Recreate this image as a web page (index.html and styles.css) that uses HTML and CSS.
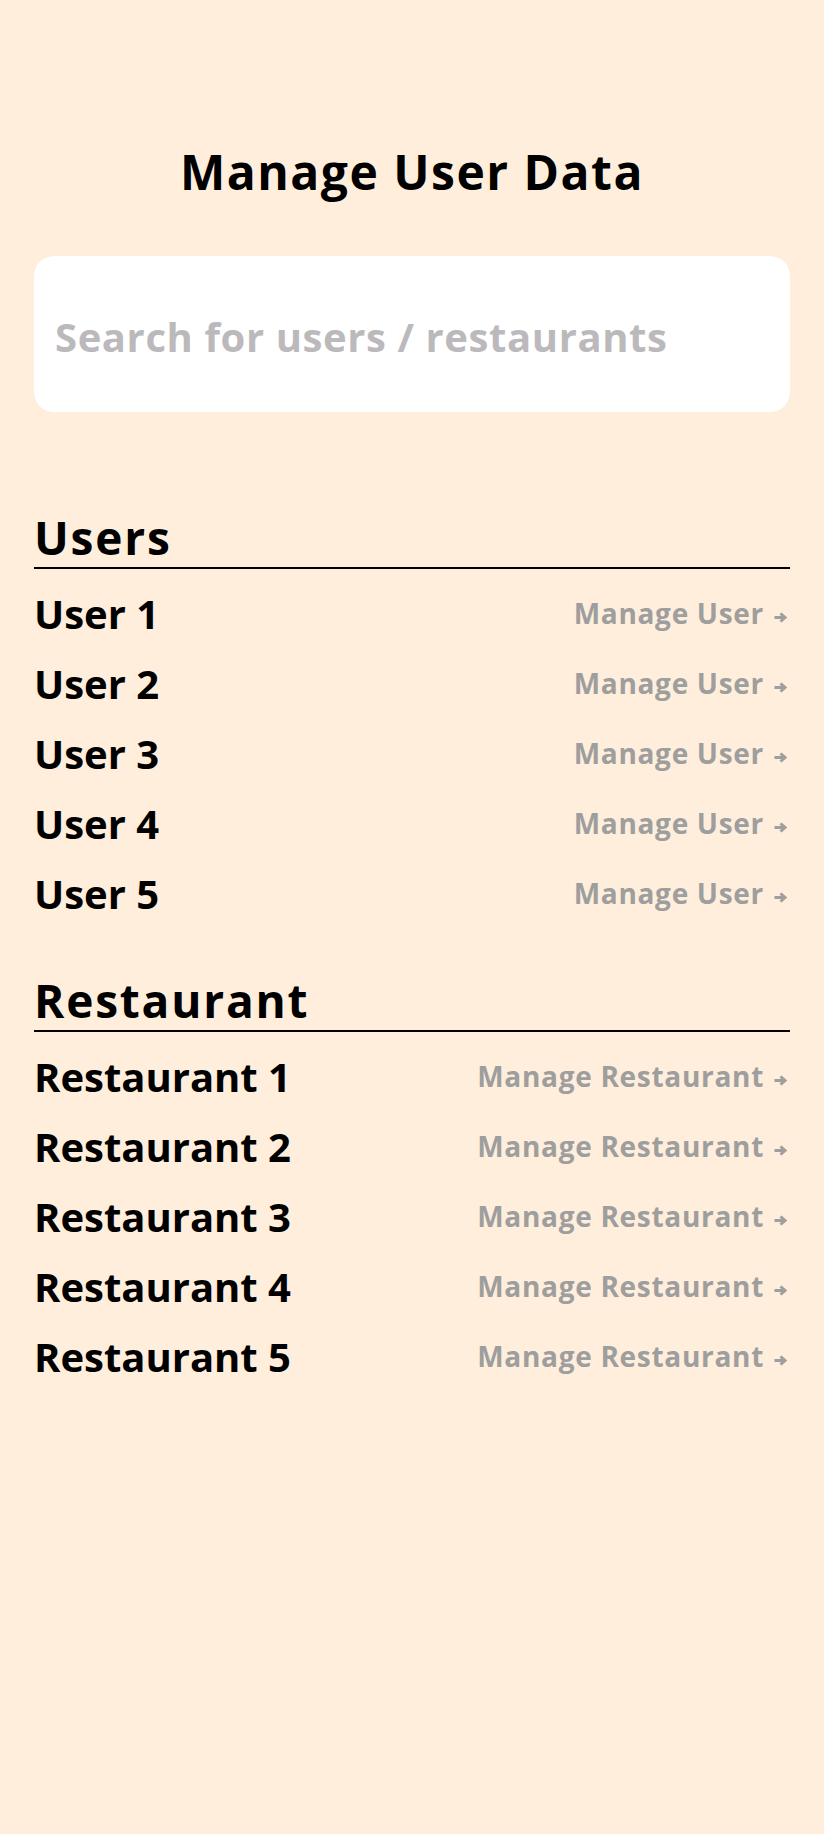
FILE: index.html
```html
<!doctype html>
<html>

<head>
  <title>Manage User Data</title>
  <link rel="stylesheet" href="styles.css">
</head>

<body>
  <div class="page">
    <h1 class="page-title">Manage User Data</h1>

    <div class="search-box">
      <input type="text" class="search-input" placeholder="Search for users / restaurants">
    </div>

    <div class="section">
      <h2 class="section-title">Users</h2>
      <div class="rows">
        <div class="row">
          <span class="row-name">User 1</span>
          <a class="row-link" href="#">Manage User <svg class="arrow" width="13" height="11" viewBox="0 0 13 11"><path d="M0.5 5.5h10.5M6.5 1.5l4.5 4-4.5 4" fill="none" stroke="currentColor" stroke-width="3"/></svg></a>
        </div>
        <div class="row">
          <span class="row-name">User 2</span>
          <a class="row-link" href="#">Manage User <svg class="arrow" width="13" height="11" viewBox="0 0 13 11"><path d="M0.5 5.5h10.5M6.5 1.5l4.5 4-4.5 4" fill="none" stroke="currentColor" stroke-width="3"/></svg></a>
        </div>
        <div class="row">
          <span class="row-name">User 3</span>
          <a class="row-link" href="#">Manage User <svg class="arrow" width="13" height="11" viewBox="0 0 13 11"><path d="M0.5 5.5h10.5M6.5 1.5l4.5 4-4.5 4" fill="none" stroke="currentColor" stroke-width="3"/></svg></a>
        </div>
        <div class="row">
          <span class="row-name">User 4</span>
          <a class="row-link" href="#">Manage User <svg class="arrow" width="13" height="11" viewBox="0 0 13 11"><path d="M0.5 5.5h10.5M6.5 1.5l4.5 4-4.5 4" fill="none" stroke="currentColor" stroke-width="3"/></svg></a>
        </div>
        <div class="row">
          <span class="row-name">User 5</span>
          <a class="row-link" href="#">Manage User <svg class="arrow" width="13" height="11" viewBox="0 0 13 11"><path d="M0.5 5.5h10.5M6.5 1.5l4.5 4-4.5 4" fill="none" stroke="currentColor" stroke-width="3"/></svg></a>
        </div>
      </div>
    </div>

    <div class="section">
      <h2 class="section-title">Restaurant</h2>
      <div class="rows">
        <div class="row">
          <span class="row-name">Restaurant 1</span>
          <a class="row-link" href="#">Manage Restaurant <svg class="arrow" width="13" height="11" viewBox="0 0 13 11"><path d="M0.5 5.5h10.5M6.5 1.5l4.5 4-4.5 4" fill="none" stroke="currentColor" stroke-width="3"/></svg></a>
        </div>
        <div class="row">
          <span class="row-name">Restaurant 2</span>
          <a class="row-link" href="#">Manage Restaurant <svg class="arrow" width="13" height="11" viewBox="0 0 13 11"><path d="M0.5 5.5h10.5M6.5 1.5l4.5 4-4.5 4" fill="none" stroke="currentColor" stroke-width="3"/></svg></a>
        </div>
        <div class="row">
          <span class="row-name">Restaurant 3</span>
          <a class="row-link" href="#">Manage Restaurant <svg class="arrow" width="13" height="11" viewBox="0 0 13 11"><path d="M0.5 5.5h10.5M6.5 1.5l4.5 4-4.5 4" fill="none" stroke="currentColor" stroke-width="3"/></svg></a>
        </div>
        <div class="row">
          <span class="row-name">Restaurant 4</span>
          <a class="row-link" href="#">Manage Restaurant <svg class="arrow" width="13" height="11" viewBox="0 0 13 11"><path d="M0.5 5.5h10.5M6.5 1.5l4.5 4-4.5 4" fill="none" stroke="currentColor" stroke-width="3"/></svg></a>
        </div>
        <div class="row">
          <span class="row-name">Restaurant 5</span>
          <a class="row-link" href="#">Manage Restaurant <svg class="arrow" width="13" height="11" viewBox="0 0 13 11"><path d="M0.5 5.5h10.5M6.5 1.5l4.5 4-4.5 4" fill="none" stroke="currentColor" stroke-width="3"/></svg></a>
        </div>
      </div>
    </div>
  </div>
</body>

</html>
```

FILE: styles.css
```css
html,
body {
  margin: 0;
  background-color: #ffeedb;
}

body {
  font-family: "Open Sans", "Liberation Sans", sans-serif;
  font-weight: 700;
  color: #000;
  min-height: 1834px;
}

.page {
  padding: 142px 34px 0 34px;
}

.page-title {
  margin: 0;
  font-size: 48px;
  line-height: 60px;
  text-align: center;
  letter-spacing: 1.5px;
}

.search-box {
  margin-top: 54px;
  height: 156px;
  background-color: #fff;
  border-radius: 20px;
  display: flex;
  align-items: center;
}

.search-input {
  width: 100%;
  border: none;
  outline: none;
  background: transparent;
  padding: 5px 21px 0 21px;
  font-family: inherit;
  font-weight: 700;
  font-size: 40px;
  letter-spacing: 0.6px;
  color: #000;
}

.search-input::placeholder {
  color: #bbb9bc;
}

.section {
  margin-top: 96px;
}

.section + .section {
  margin-top: 43px;
}

.section-title {
  margin: 0;
  font-size: 46px;
  line-height: 59px;
  letter-spacing: 1.8px;
  border-bottom: 2px solid #000;
}

.rows {
  padding-top: 9px;
}

.row {
  display: flex;
  justify-content: space-between;
  align-items: center;
  height: 70px;
}

.row-name {
  font-size: 40px;
}

.row-link {
  display: flex;
  align-items: center;
  font-size: 28px;
  letter-spacing: 0.7px;
  color: #9e9e9e;
  text-decoration: none;
}

.arrow {
  margin: 8px 3px 0 10px;
}
```
